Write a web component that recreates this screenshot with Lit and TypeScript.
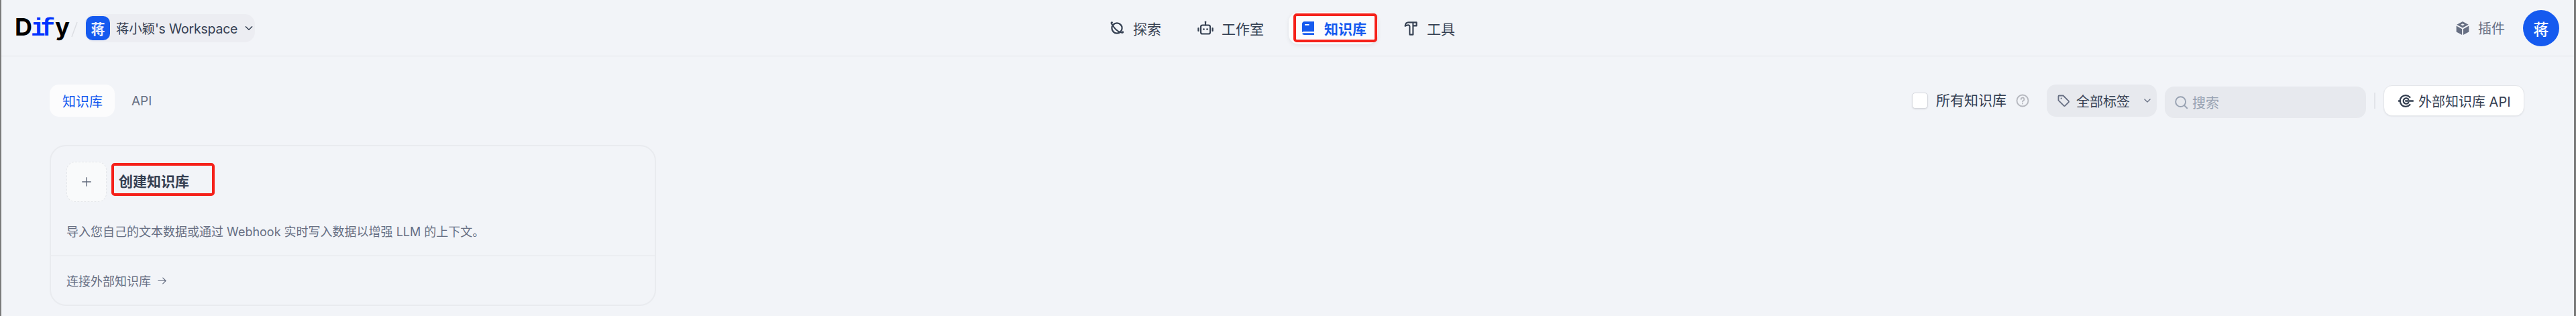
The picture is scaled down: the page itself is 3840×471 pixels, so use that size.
import { LitElement, html, css, svg } from "lit";
import { customElement } from "lit/decorators.js";

const ico = (content: unknown, size = 24, cls = "") => html`<svg class=${cls} width=${size} height=${size} viewBox="0 0 24 24" fill="none" stroke="currentColor" stroke-width="2.2" stroke-linecap="round" stroke-linejoin="round">${content}</svg>`;

const planet = svg`<circle cx="12" cy="12" r="7.6"/><path d="M4.4 6.2C3 4.4 3.4 3.2 5 3.4M5.6 6.4C7 11.5 13 17.5 18.5 18.6c2.4.5 3 .2 2.4-1.4" stroke-width="2"/>`;
const robot = svg`<rect x="5" y="7.5" width="14" height="13" rx="2.6"/><path d="M12 3.5v4M1.4 12v4M22.6 12v4"/><circle cx="12" cy="2.8" r="1.4" fill="currentColor" stroke="none"/><circle cx="9.5" cy="13.6" r="1.3" fill="currentColor" stroke="none"/><circle cx="14.5" cy="13.6" r="1.3" fill="currentColor" stroke="none"/>`;
const book = svg`<path fill="currentColor" stroke="none" d="M6.5 2H21v15H6.6C5 17 3.8 17.4 3 18V5.5C3 3.6 4.6 2 6.5 2Z"/><path fill="currentColor" stroke="none" d="M6.6 19.2H21V22H6.6C4.6 22 3.2 21.5 3.2 20.6s1.4-1.4 3.4-1.4Z"/><rect x="7" y="6" width="6.5" height="1.8" fill="#fff" stroke="none"/>`;
const hammer = svg`<path d="M8.5 3.4H20.6V8.4H15.4V21.6H10.4V8.8C10.2 7.2 7.5 6.7 3.6 8.8 4 5.6 6 3.4 8.5 3.4ZM15.4 3.4V8.4" stroke-width="2.1"/>`;
const cube = svg`<path fill="currentColor" stroke="none" fill-rule="evenodd" d="M12 1l9.5 5.2L12 11.4 2.500 6.200 12 1Zm0 3.500L8.900 6.200 12 7.900l3.100-1.700L12 4.500Z"/><path fill="currentColor" stroke="none" d="M1.800 8.300l9.200 5V23l-9.200-5V8.300ZM22.200 8.300l-9.200 5V23l9.200-5V8.300Z"/>`;
const tag = svg`<path d="M3 4.200C3 3.500 3.500 3 4.200 3h7.300l9.700 9.700c.6.600.6 1.500 0 2.100l-6.400 6.400c-.6.600-1.500.600-2.100 0L3 11.500V4.200Z"/><circle cx="8" cy="8" r="1.300" fill="currentColor" stroke="none"/>`;
const search = svg`<circle cx="11" cy="11" r="8.500"/><path d="M17.500 17.500l4.500 4.500"/>`;
const help = svg`<circle cx="12" cy="12" r="10.200"/><path d="M9.300 9.500a2.800 2.800 0 1 1 4.200 2.400c-1 .6-1.500 1.100-1.500 2.100"/><circle cx="12" cy="17.300" r="1.200" fill="currentColor" stroke="none"/>`;
const api = svg`<path d="M18.200 6.200A8.800 8.800 0 1 0 18.200 17.800" stroke-width="2.400"/><path d="M16 9.400A4.400 4.400 0 1 0 16 14.600" stroke-width="2.400"/><path d="M11.500 12H23M.6 12h2.200" stroke-width="2.400"/>`;
const chevron = svg`<path d="M5 8.500l7 7 7-7"/>`;
const arrow = svg`<path d="M3 12h18M14 5l7 7-7 7" stroke-width="1.900"/>`;
const plus = svg`<path d="M12 3v18M3 12h18" stroke-width="1.800" stroke-linecap="butt"/>`;

@customElement("app-root")
export class AppRoot extends LitElement {
  static styles = css`
    :host {
      display: block;
      height: 471px;
      font-family: Inter, "Noto Sans CJK SC", "Noto Sans", sans-serif;
      color: #354052;
      overflow: hidden;
    }
    * { box-sizing: border-box; }
    svg { flex: none; display: block; }
    .page {
      height: 471px;
      background: #f2f4f8;
      border-left: 2px solid #7b7b7b;
      border-right: 3px solid #7b7b7b;
      display: flex;
      flex-direction: column;
    }
    .header {
      height: 84px;
      flex: none;
      border-bottom: 1px solid #e4e6ea;
      display: grid;
      grid-template-columns: 1634px auto 1fr;
      align-items: center;
    }
    .brand { display: flex; align-items: center; padding-left: 20px; }
    .logo {
      width: 76px;
      font-size: 36px;
      font-weight: 700;
      color: #000;
      letter-spacing: -1px;
      line-height: 48px;
      display: flex;
      align-items: baseline;
    }
    .logo b { color: #0033ff; font-family: "Liberation Mono", monospace; font-weight: 700; font-size: 36px; letter-spacing: -7px; margin: 0 7px 0 -1px; }
    .slash { width: 10px; height: 24px; margin: 4px 0 0 8px; }
    .ws {
      margin-left: 10px;
      width: 254px;
      height: 42px;
      border-radius: 15px;
      background: #ecedf2;
      display: flex;
      align-items: center;
      padding-left: 2px;
      gap: 9px;
      white-space: nowrap;
      font-size: 19.5px;
    }
    .ws-av {
      width: 36px; height: 36px; border-radius: 10px;
      background: #155aef; color: #e8eefc;
      display: flex; align-items: center; justify-content: center;
      font-size: 21px; font-weight: 600;
    }
    .ws-name { width: 181px; letter-spacing: -.2px; }
    .nav { display: flex; gap: 20px; }
    .nav-item {
      position: relative;
      height: 48px;
      padding: 0 17px;
      display: flex;
      align-items: center;
      gap: 12px;
      font-size: 21px;
      border-radius: 15px;
      color: #354052;
      white-space: nowrap;
    }
    .nav-item.active {
      background: #fcfcfd;
      color: #155aef;
      font-weight: 700;
      box-shadow: 0 2px 6px rgba(16,24,40,.08);
    }
    .mark {
      position: absolute;
      left: 7px; right: 1px; top: 2px; bottom: 3px;
      border: 4px solid #f5211a;
      border-radius: 5px;
    }
    .right { display: flex; align-items: center; justify-content: flex-end; padding-right: 22px; }
    .plugin { display: flex; align-items: center; gap: 12px; font-size: 20px; color: #676f83; margin-right: 27px; }
    .avatar {
      width: 54px; height: 54px; border-radius: 50%;
      background: #155aef; color: #fff;
      display: flex; align-items: center; justify-content: center;
      font-size: 23px; font-weight: 500;
    }
    .toolbar {
      margin-top: 42px;
      padding: 0 74px 0 72px;
      height: 48px;
      flex: none;
      display: flex;
      align-items: flex-start;
    }
    .tabs { display: flex; align-items: center; flex: 1; }
    .tab { height: 48px; display: flex; align-items: center; font-size: 19px; color: #676f83; padding: 0 25px; }
    .tab.on { width: 97px; padding: 0 0 0 19px; background: #fcfcfd; color: #155aef; border-radius: 14px; font-size: 20px; }
    .check { width: 24px; height: 24px; margin-top: 12px; background: #fff; border: 1px solid #d6d8de; border-radius: 5px; box-shadow: 0 1px 2px rgba(16,24,40,.1); }
    .check-label { margin: 0 14px 0 12px; line-height: 48px; font-size: 21px; white-space: nowrap; }
    .help { color: #b6b8bf; margin: 14px 26px 0 0; }
    .tagbtn {
      width: 164px; height: 48px; border-radius: 14px; background: #e7e9ee;
      display: flex; align-items: center; padding-left: 15px; gap: 9px;
      font-size: 20px; white-space: nowrap; margin-right: 12px;
    }
    .tagbtn .t { color: #676f83; }
    .tagbtn .c { color: #676f83; margin-left: 10px; }
    .searchbox {
      width: 300px; height: 47px; margin-top: 3px; border-radius: 14px; background: #e7e9ee;
      display: flex; align-items: center; padding-left: 14px; gap: 6px;
      font-size: 20px; color: #98a2b2;
    }
    .sep { width: 2px; height: 24px; margin: 12px 12px 0; background: #e2e4e9; }
    .extbtn {
      width: 210px; height: 46px; margin-top: 1px; border-radius: 13px; background: #fff;
      border: 1px solid #e4e6ea; box-shadow: 0 1px 2px rgba(16,24,40,.06);
      display: flex; align-items: center; padding-left: 21px; gap: 7px;
      font-size: 20px; white-space: nowrap;
    }
    .card {
      margin: 42px 0 0 72px;
      width: 904px;
      height: 240px;
      flex: none;
      border: 2px solid #e9ebef;
      border-radius: 24px;
      display: flex;
      flex-direction: column;
    }
    .card-top { height: 164px; padding: 23px 23px 0; flex: none; border-bottom: 2px solid #eceef2; }
    .card-head { display: flex; align-items: flex-start; gap: 7px; height: 60px; }
    .plus {
      width: 60px; height: 60px; border-radius: 13px;
      background: #f9fafb; border: 1px dashed #e4e6ea;
      color: #5d6578;
      display: flex; align-items: center; justify-content: center;
    }
    .name {
      margin-top: 2px;
      width: 154px; height: 49px;
      border: 4px solid #f5211a;
      border-radius: 5px;
      padding: 9px 0 0 7px;
      font-size: 21px; font-weight: 700; line-height: 30px;
      color: #354052;
      white-space: nowrap;
    }
    .desc { margin-top: 33px; font-size: 18px; line-height: 24px; color: #676f83; white-space: nowrap; }
    .foot { flex: 1; display: flex; align-items: center; padding-left: 23px; gap: 9px; font-size: 18px; color: #676f83; }
  `;

  render() {
    return html`<div class="page">
      <header class="header">
        <div class="brand">
          <div class="logo">D<b>if</b>y</div>
          <svg class="slash" viewBox="0 0 10 24" fill="none" stroke="#dcdee3" stroke-width="1.500"><path d="M9 1 1 23"/></svg>
          <div class="ws">
            <div class="ws-av">蒋</div>
            <span class="ws-name">蒋小颖's Workspace</span>
            ${ico(chevron, 16)}
          </div>
        </div>
        <nav class="nav">
          <div class="nav-item">${ico(planet)}探索</div>
          <div class="nav-item">${ico(robot)}工作室</div>
          <div class="nav-item active">${ico(book)}知识库<span class="mark"></span></div>
          <div class="nav-item">${ico(hammer)}工具</div>
        </nav>
        <div class="right">
          <div class="plugin">${ico(cube, 22)}插件</div>
          <div class="avatar">蒋</div>
        </div>
      </header>
      <section class="toolbar">
        <div class="tabs">
          <div class="tab on">知识库</div>
          <div class="tab">API</div>
        </div>
        <div class="check"></div>
        <div class="check-label">所有知识库</div>
        <span class="help">${ico(help, 20)}</span>
        <div class="tagbtn"><span class="t">${ico(tag, 20)}</span>全部标签<span class="c">${ico(chevron, 14)}</span></div>
        <div class="searchbox">${ico(search, 21)}搜索</div>
        <div class="sep"></div>
        <div class="extbtn">${ico(api, 23)}外部知识库 API</div>
      </section>
      <section class="card">
        <div class="card-top">
          <div class="card-head">
            <div class="plus">${ico(plus, 18)}</div>
            <div class="name">创建知识库</div>
          </div>
          <div class="desc">导入您自己的文本数据或通过 Webhook 实时写入数据以增强 LLM 的上下文。</div>
        </div>
        <div class="foot">连接外部知识库 ${ico(arrow, 15)}</div>
      </section>
    </div>`;
  }
}
